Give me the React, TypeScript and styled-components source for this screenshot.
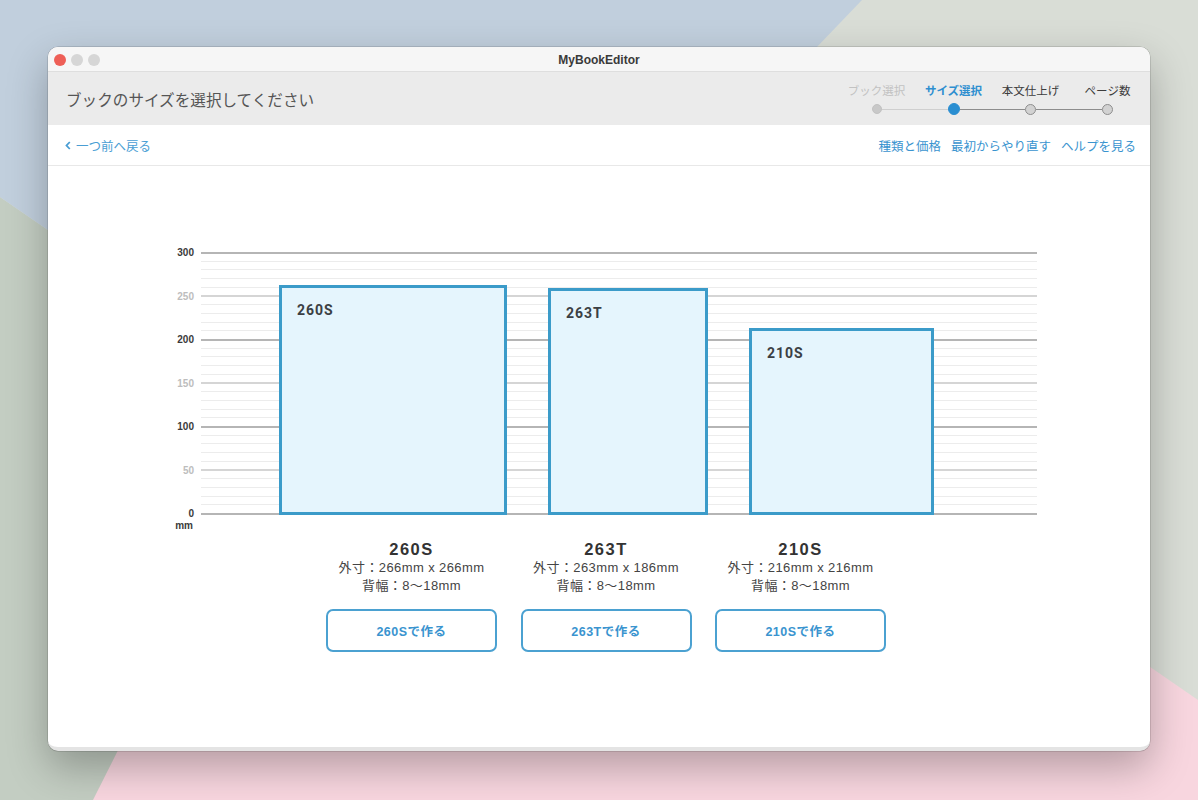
import React from "react";
import styled, { createGlobalStyle } from "styled-components";

const GlobalStyle = createGlobalStyle`
  html, body { margin: 0; padding: 0; }
  body { font-family: "Liberation Sans", "Noto Sans CJK JP", sans-serif; }
  * { box-sizing: border-box; }
`;

const JP = `"Noto Sans CJK JP", sans-serif`;
const LAT = `"Liberation Sans", "Noto Sans CJK JP", sans-serif`;
const BLUE = "#3a94cf";

const Desktop = styled.div`
  position: relative;
  width: 1198px;
  height: 800px;
  overflow: hidden;
  background: #d9ddd6;
  padding: 47px 0 0 48px;
`;

const Wallpaper = styled.svg`
  position: absolute;
  inset: 0;
  width: 100%;
  height: 100%;
`;

const Window = styled.div`
  position: relative;
  width: 1102px;
  height: 704px;
  border-radius: 10px;
  background: #fff;
  overflow: hidden;
  display: flex;
  flex-direction: column;
  border-bottom: 4px solid #e4e4e4;
  box-shadow: 0 0 0 0.5px rgba(0, 0, 0, 0.22), 0 16px 40px rgba(0, 0, 0, 0.28);
`;

const TitleBar = styled.div`
  height: 25px;
  flex: none;
  display: grid;
  grid-template-columns: 1fr auto 1fr;
  align-items: center;
  background: #f6f6f6;
  border-bottom: 1px solid #dedede;
  padding: 1px 0 0 6px;
`;

const Lights = styled.div`
  display: flex;
  gap: 5px;
`;

const Light = styled.span<{ $c: string }>`
  width: 12px;
  height: 12px;
  border-radius: 50%;
  background: ${(p) => p.$c};
`;

const WinTitle = styled.div`
  font-family: ${LAT};
  font-weight: 700;
  font-size: 12px;
  color: #3a3a3a;
  padding-right: 6px;
`;

const HeaderBand = styled.div`
  height: 53px;
  flex: none;
  background: #ebebeb;
  display: flex;
  justify-content: space-between;
  align-items: flex-start;
  padding: 0 4px 0 18px;
`;

const PageTitle = styled.h1`
  margin: 0;
  align-self: center;
  font-family: ${JP};
  font-weight: 400;
  font-size: 15.6px;
  line-height: 20px;
  color: #555;
  padding-top: 1px;
`;

const Stepper = styled.div`
  display: grid;
  grid-template-columns: repeat(4, 77px);
  margin-top: 11px;
`;

const Step = styled.div`
  display: flex;
  flex-direction: column;
  align-items: stretch;
`;

const StepLabel = styled.div<{ $state: "done" | "active" | "todo" }>`
  text-align: center;
  font-family: ${JP};
  font-size: 11.5px;
  line-height: 14px;
  font-weight: ${(p) => (p.$state === "active" ? 700 : 400)};
  color: ${(p) =>
    p.$state === "active" ? "#2e8fd0" : p.$state === "done" ? "#c2c2c2" : "#3c3c3c"};
`;

const StepTrack = styled.div`
  display: flex;
  align-items: center;
  height: 12px;
  margin-top: 6px;
`;

const Segment = styled.span<{ $tone: "none" | "light" | "dark" }>`
  flex: 1;
  height: 1px;
  background: ${(p) =>
    p.$tone === "none" ? "transparent" : p.$tone === "light" ? "#cfcfcf" : "#8d8d8d"};
`;

const Dot = styled.span<{ $state: "done" | "active" | "todo" }>`
  flex: none;
  border-radius: 50%;
  width: ${(p) => (p.$state === "active" ? 12 : p.$state === "done" ? 10 : 11)}px;
  height: ${(p) => (p.$state === "active" ? 12 : p.$state === "done" ? 10 : 11)}px;
  background: ${(p) =>
    p.$state === "active" ? "#2a8ed1" : p.$state === "done" ? "#c8c8c8" : "#d2d2d2"};
  border: 1px solid
    ${(p) => (p.$state === "active" ? "#2a8ed1" : p.$state === "done" ? "#c2c2c2" : "#8e8e8e")};
`;

const NavRow = styled.div`
  height: 41px;
  flex: none;
  display: flex;
  justify-content: space-between;
  align-items: center;
  border-bottom: 1px solid #e8e8e8;
  padding: 1px 14px 0 17px;
`;

const BackLink = styled.a`
  display: flex;
  align-items: center;
  gap: 5px;
  font-family: ${JP};
  font-size: 12.5px;
  line-height: 16px;
  color: #4a9ed4;
  text-decoration: none;
  cursor: pointer;
`;

const Links = styled.div`
  display: flex;
  gap: 10px;
`;

const NavLink = styled.a`
  font-family: ${JP};
  font-size: 12.5px;
  line-height: 16px;
  color: ${BLUE};
  text-decoration: none;
  cursor: pointer;
`;

const Content = styled.div`
  flex: 1;
  padding: 81px 0 0 114px;
  display: flex;
  flex-direction: column;
`;

const ChartRow = styled.div`
  display: flex;
  align-items: flex-start;
  gap: 7px;
`;

const AxisCol = styled.div`
  width: 32px;
  display: flex;
  flex-direction: column;
`;

const Ticks = styled.div`
  height: 273px;
  display: flex;
  flex-direction: column;
  justify-content: space-between;
`;

const Tick = styled.div<{ $major: boolean }>`
  font-family: ${LAT};
  font-weight: 700;
  font-size: 10px;
  line-height: 12px;
  text-align: right;
  color: ${(p) => (p.$major ? "#3a3a3a" : "#bdbdbd")};
`;

const Unit = styled.div`
  font-family: ${LAT};
  font-weight: 700;
  font-size: 10px;
  line-height: 11px;
  text-align: right;
  color: #3a3a3a;
  padding-right: 1px;
`;

const Plot = styled.div`
  margin-top: 5px;
  width: 836px;
  height: 263px;
  display: flex;
  align-items: flex-end;
  gap: 41px;
  padding-left: 78px;
  background-image:
    repeating-linear-gradient(to bottom, #b5b5b5 0 2px, transparent 2px 87px),
    repeating-linear-gradient(
      to bottom,
      transparent 0 43.5px,
      #d5d5d5 43.5px 45.5px,
      transparent 45.5px 87px
    ),
    repeating-linear-gradient(to bottom, #ececec 0 1px, transparent 1px 8.7px);
`;

const Bar = styled.div`
  flex: none;
  border: 3px solid #3b9bc9;
  background: #e5f5fd;
  padding: 14px 0 0 15px;
`;

const BarLabel = styled.div`
  font-family: "Roboto", ${LAT};
  font-weight: 700;
  font-size: 14px;
  letter-spacing: 1px;
  line-height: 17px;
  color: #3b3f44;
`;

const InfoRow = styled.div`
  display: grid;
  grid-template-columns: repeat(3, 171px);
  column-gap: 23.5px;
  margin: 8px 0 0 164px;
`;

const Info = styled.div`
  display: flex;
  flex-direction: column;
  align-items: center;
`;

const Name = styled.div`
  font-family: ${LAT};
  font-weight: 700;
  font-size: 16.5px;
  letter-spacing: 1.5px;
  line-height: 20px;
  color: #333;
`;

const Spec = styled.div`
  font-family: ${LAT};
  font-size: 13px;
  letter-spacing: 0.4px;
  line-height: 18px;
  color: #444;
  white-space: nowrap;
`;

const MakeButton = styled.button`
  margin-top: 14px;
  width: 171px;
  height: 43px;
  border: 2px solid #4ba1d1;
  border-radius: 7px;
  background: #fff;
  color: ${BLUE};
  font-family: ${LAT};
  font-weight: 700;
  font-size: 12.5px;
  letter-spacing: 0.5px;
  cursor: pointer;
`;

type StepState = "done" | "active" | "todo";

const steps: { label: string; state: StepState }[] = [
  { label: "ブック選択", state: "done" },
  { label: "サイズ選択", state: "active" },
  { label: "本文仕上げ", state: "todo" },
  { label: "ページ数", state: "todo" },
];

const books = [
  { name: "260S", h: 266, w: 266 },
  { name: "263T", h: 263, w: 186 },
  { name: "210S", h: 216, w: 216 },
];

const H_SCALE = 0.865;
const W_SCALE = 0.858;
const ticks = [300, 250, 200, 150, 100, 50, 0];

export default function App() {
  const segTone = (i: number): "none" | "light" | "dark" => {
    if (i < 0 || i >= steps.length - 1) return "none";
    return i === 0 ? "light" : "dark";
  };
  return (
    <>
      <GlobalStyle />
      <Desktop>
        <Wallpaper viewBox="0 0 1198 800" preserveAspectRatio="none">
          <rect x="0" y="0" width="1198" height="800" fill="#d9ddd6" />
          <polygon points="0,197 405,476 620,800 0,800" fill="#c3cdc2" />
          <polygon points="0,0 862,0 405,476 0,197" fill="#c1cfdd" />
          <polygon points="93,800 415,160 1198,700 1198,800" fill="#f8d6df" />
        </Wallpaper>
        <Window>
          <TitleBar>
            <Lights>
              <Light $c="#ee5f57" />
              <Light $c="#d6d6d6" />
              <Light $c="#d6d6d6" />
            </Lights>
            <WinTitle>MyBookEditor</WinTitle>
            <span />
          </TitleBar>
          <HeaderBand>
            <PageTitle>ブックのサイズを選択してください</PageTitle>
            <Stepper>
              {steps.map((s, i) => (
                <Step key={s.label}>
                  <StepLabel $state={s.state}>{s.label}</StepLabel>
                  <StepTrack>
                    <Segment $tone={segTone(i - 1)} />
                    <Dot $state={s.state} />
                    <Segment $tone={segTone(i)} />
                  </StepTrack>
                </Step>
              ))}
            </Stepper>
          </HeaderBand>
          <NavRow>
            <BackLink>
              <svg width="6" height="9" viewBox="0 0 6 9">
                <path d="M4.8 1 L1.5 4.5 L4.8 8" fill="none" stroke="#4a9ed4" strokeWidth="1.8" />
              </svg>
              一つ前へ戻る
            </BackLink>
            <Links>
              <NavLink>種類と価格</NavLink>
              <NavLink>最初からやり直す</NavLink>
              <NavLink>ヘルプを見る</NavLink>
            </Links>
          </NavRow>
          <Content>
            <ChartRow>
              <AxisCol>
                <Ticks>
                  {ticks.map((t) => (
                    <Tick key={t} $major={t % 100 === 0}>
                      {t}
                    </Tick>
                  ))}
                </Ticks>
                <Unit>mm</Unit>
              </AxisCol>
              <Plot>
                {books.map((b) => (
                  <Bar
                    key={b.name}
                    style={{
                      width: Math.round(b.w * W_SCALE),
                      height: Math.round(b.h * H_SCALE),
                    }}
                  >
                    <BarLabel>{b.name}</BarLabel>
                  </Bar>
                ))}
              </Plot>
            </ChartRow>
            <InfoRow>
              {books.map((b) => (
                <Info key={b.name}>
                  <Name>{b.name}</Name>
                  <Spec>
                    外寸：{b.h}mm x {b.w}mm
                  </Spec>
                  <Spec>背幅：8〜18mm</Spec>
                  <MakeButton>{b.name}で作る</MakeButton>
                </Info>
              ))}
            </InfoRow>
          </Content>
        </Window>
      </Desktop>
    </>
  );
}
